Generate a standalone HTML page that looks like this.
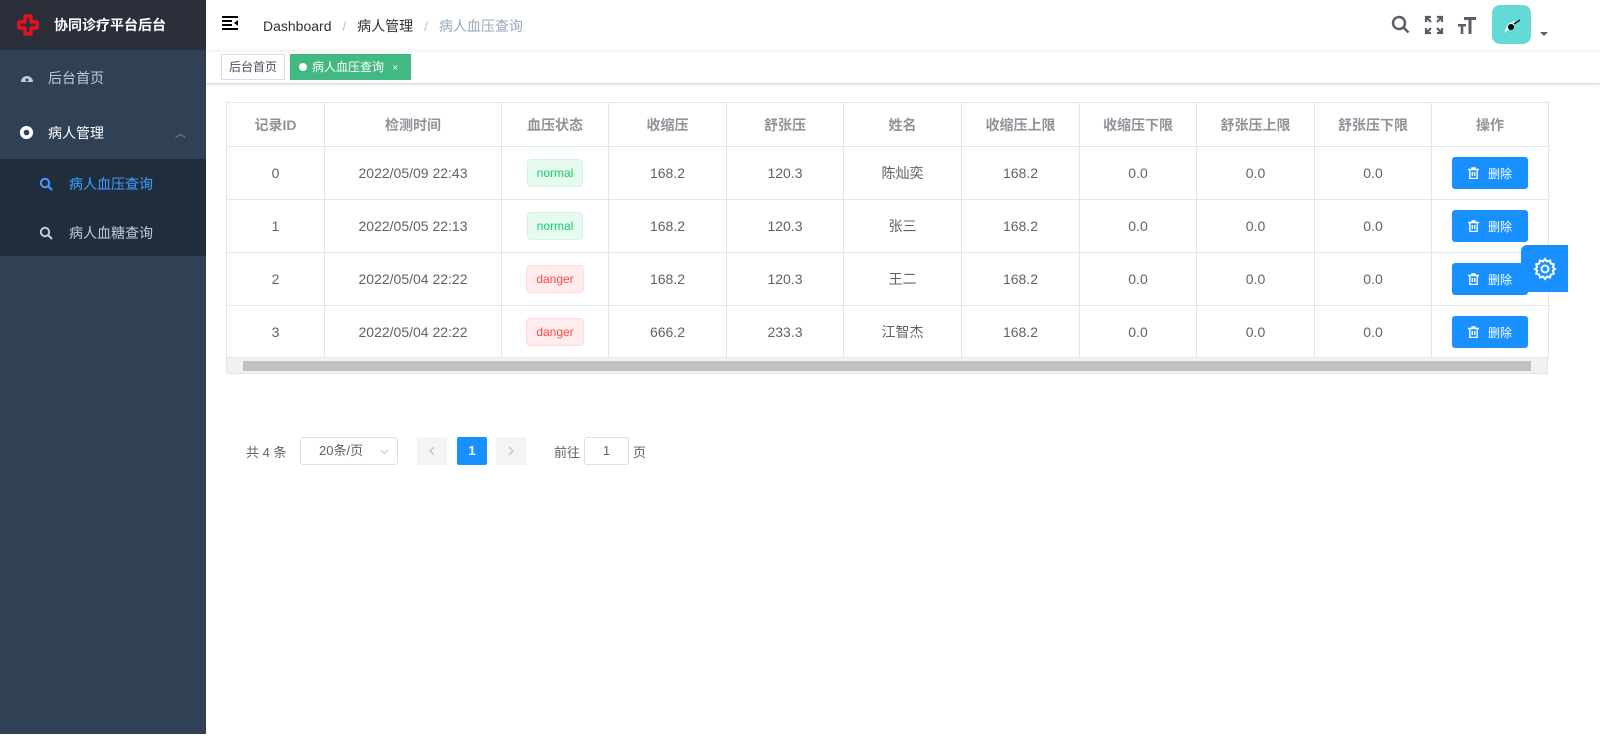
<!DOCTYPE html>
<html><head><meta charset="utf-8"><style>
*{box-sizing:border-box;margin:0;padding:0}
body{width:1600px;height:749px;position:relative;font-family:"Liberation Sans","Noto Sans CJK SC",sans-serif;background:#fff;overflow:hidden;font-size:14px;color:#606266}
.side{position:absolute;left:0;top:0;width:206px;height:734px;background:#304156}
.logo{height:50px;background:#2b2f3a;display:flex;align-items:center;color:#fff;font-weight:bold;font-size:14px}
.mi{position:absolute;left:0;width:206px;display:flex;align-items:center;color:#bfcbd9;font-size:14px}
.hdr{position:absolute;left:206px;top:0;right:0;height:50px;background:#fff;box-shadow:0 1px 4px rgba(0,21,41,.08)}
.tags{position:absolute;left:206px;top:50px;right:0;height:34px;border-bottom:1px solid #d8dce5;box-shadow:0 1px 3px rgba(0,0,0,.12)}
table{position:absolute;left:226px;top:102px;border-collapse:collapse;width:1322px;table-layout:fixed}
td,th{border:1px solid #dfe6ec;text-align:center;font-size:14px;color:#606266}
th{height:44px;color:#909399;font-weight:bold}
td{height:53px}
.tg{display:inline-block;height:28px;line-height:26px;padding:0 9px;font-size:12px;border-radius:4px;border:1px solid}
.n{background:#e7faf0;border-color:#d0f5e0;color:#13ce66}
.d{background:#ffeded;border-color:#ffdbdb;color:#ff4949}
.btn{display:inline-flex;align-items:center;justify-content:center;width:76px;height:32px;background:#1890ff;border-radius:3px;color:#fff;font-size:12px}
.btn svg{margin-right:9px}
</style></head><body>
<div class="side">
 <div class="logo"><svg style="margin:0 14px 0 16px" width="24" height="24" viewBox="0 0 24 24"><path d="M9 3h6v6h6v6h-6v6H9v-6H3V9h6z" fill="none" stroke="#e3101e" stroke-width="3.5" stroke-linejoin="round"/></svg>协同诊疗平台后台</div>
 <div class="mi" style="top:50px;height:56px"><svg style="margin:0 14px 0 20px" width="14" height="14" viewBox="0 0 14 14"><path d="M1 11A6 6 0 1 1 13 11Z" fill="#bfcbd9"/><circle cx="7" cy="9" r="1.5" fill="#304156"/></svg>后台首页</div>
 <div class="mi" style="top:106px;height:53px;color:#fff"><svg style="margin:0 14px 0 19px" width="15" height="15" viewBox="0 0 16 16"><circle cx="8" cy="8" r="7" fill="#fff"/><circle cx="8" cy="8" r="3" fill="#304156"/></svg>病人管理<span style="position:absolute;right:20px;color:#909399;font-size:11px">︿</span></div>
 <div style="position:absolute;top:159px;left:0;width:206px;height:97px;background:#1f2d3d"></div>
 <div class="mi" style="top:159px;height:50px;color:#409eff"><svg style="margin:0 16px 0 39px" width="14" height="14" viewBox="0 0 14 14"><circle cx="6" cy="6" r="4.2" fill="none" stroke="#409eff" stroke-width="2"/><path d="M9 9l4 4" stroke="#409eff" stroke-width="2.2"/></svg>病人血压查询</div>
 <div class="mi" style="top:209px;height:47px"><svg style="margin:0 16px 0 39px" width="14" height="14" viewBox="0 0 14 14"><circle cx="6" cy="6" r="4.2" fill="none" stroke="#bfcbd9" stroke-width="2"/><path d="M9 9l4 4" stroke="#bfcbd9" stroke-width="2.2"/></svg>病人血糖查询</div>
</div>
<div class="hdr">
 <svg style="position:absolute;left:16px;top:16px" width="16" height="14" viewBox="0 0 16 14"><path d="M0 1h16M0 5h10M0 9h10M0 13h16" stroke="#000" stroke-width="2"/><path d="M16 4v6l-4-3z" fill="#000"/></svg>
 <div style="position:absolute;left:57px;top:16px;font-size:14px;color:#303133">Dashboard <span style="color:#c0c4cc;margin:0 7px">/</span> 病人管理 <span style="color:#c0c4cc;margin:0 7px">/</span> <span style="color:#97a8be">病人血压查询</span></div>
 <svg style="position:absolute;left:1185px;top:15px" width="20" height="20" viewBox="0 0 20 20"><circle cx="8" cy="8" r="6" fill="none" stroke="#5a5e66" stroke-width="2.4"/><path d="M12.5 12.5l5 5" stroke="#5a5e66" stroke-width="2.6"/></svg>
 <svg style="position:absolute;left:1218px;top:15px" width="20" height="20" viewBox="0 0 20 20" stroke="#5a5e66" stroke-width="2.2" fill="none"><path d="M2 7V2h5M2 2l5 5M18 7V2h-5M18 2l-5 5M2 13v5h5M2 18l5-5M18 13v5h-5M18 18l-5-5"/></svg>
 <svg style="position:absolute;left:1251px;top:15px" width="20" height="20" viewBox="0 0 20 20" fill="#5a5e66"><path d="M7 2h12v3h-4.5v14h-3V5H7zM1 9h8v2.5H6.3V19H3.7v-7.5H1z"/></svg>
 <div style="position:absolute;left:1286px;top:5px;width:39px;height:39px;border-radius:8px;background:#64dad6"><svg width="39" height="39" viewBox="0 0 39 39"><path d="M12 28l4-9 6-3 2 2-4 4z" fill="#fff"/><circle cx="19" cy="22" r="3" fill="#000"/><path d="M22 19l6-4" stroke="#000" stroke-width="1.3"/></svg></div>
 <div style="position:absolute;left:1334px;top:32px;border:4px solid transparent;border-top-color:#5a5e66"></div>
</div>
<div class="tags">
 <div style="position:absolute;left:15px;top:4px;height:26px;width:64px;border:1px solid #d8dce5;font-size:12px;line-height:24px;text-align:center;color:#495060">后台首页</div>
 <div style="position:absolute;left:84px;top:4px;height:26px;width:121px;background:#42b983;font-size:12px;line-height:26px;color:#fff;padding-left:9px"><span style="display:inline-block;width:8px;height:8px;border-radius:50%;background:#fff;margin-right:5px"></span>病人血压查询 <span style="margin-left:5px;font-size:10px">×</span></div>
</div>
<table>
<colgroup><col style="width:98px"><col style="width:177px"><col style="width:107px"><col style="width:118px"><col style="width:117px"><col style="width:118px"><col style="width:118px"><col style="width:117px"><col style="width:118px"><col style="width:117px"><col style="width:117px"></colgroup>
<tr><th>记录ID</th><th>检测时间</th><th>血压状态</th><th>收缩压</th><th>舒张压</th><th>姓名</th><th>收缩压上限</th><th>收缩压下限</th><th>舒张压上限</th><th>舒张压下限</th><th>操作</th></tr>
<tr><td>0</td><td>2022/05/09 22:43</td><td><span class="tg n">normal</span></td><td>168.2</td><td>120.3</td><td>陈灿奕</td><td>168.2</td><td>0.0</td><td>0.0</td><td>0.0</td><td><span class="btn"><svg width="11" height="12" viewBox="0 0 11 12" fill="none" stroke="#fff" stroke-width="1.4"><path d="M0 2.5h11M4 2.5V1h3v1.5M1.8 2.5v9h7.4v-9M4.3 5v4M6.7 5v4"/></svg>删除</span></td></tr>
<tr><td>1</td><td>2022/05/05 22:13</td><td><span class="tg n">normal</span></td><td>168.2</td><td>120.3</td><td>张三</td><td>168.2</td><td>0.0</td><td>0.0</td><td>0.0</td><td><span class="btn"><svg width="11" height="12" viewBox="0 0 11 12" fill="none" stroke="#fff" stroke-width="1.4"><path d="M0 2.5h11M4 2.5V1h3v1.5M1.8 2.5v9h7.4v-9M4.3 5v4M6.7 5v4"/></svg>删除</span></td></tr>
<tr><td>2</td><td>2022/05/04 22:22</td><td><span class="tg d">danger</span></td><td>168.2</td><td>120.3</td><td>王二</td><td>168.2</td><td>0.0</td><td>0.0</td><td>0.0</td><td><span class="btn"><svg width="11" height="12" viewBox="0 0 11 12" fill="none" stroke="#fff" stroke-width="1.4"><path d="M0 2.5h11M4 2.5V1h3v1.5M1.8 2.5v9h7.4v-9M4.3 5v4M6.7 5v4"/></svg>删除</span></td></tr>
<tr><td>3</td><td>2022/05/04 22:22</td><td><span class="tg d">danger</span></td><td>666.2</td><td>233.3</td><td>江智杰</td><td>168.2</td><td>0.0</td><td>0.0</td><td>0.0</td><td><span class="btn"><svg width="11" height="12" viewBox="0 0 11 12" fill="none" stroke="#fff" stroke-width="1.4"><path d="M0 2.5h11M4 2.5V1h3v1.5M1.8 2.5v9h7.4v-9M4.3 5v4M6.7 5v4"/></svg>删除</span></td></tr>
</table>
<div style="position:absolute;left:226px;top:357px;width:1322px;height:17px;background:#f1f1f1;border:1px solid #dfe6ec"><div style="position:absolute;left:16px;top:3px;width:1288px;height:10px;background:#c1c1c1"></div></div>
<div style="position:absolute;left:1521px;top:245px;width:47px;height:47px;background:#1890ff;border-radius:6px 0 0 6px"><svg style="margin:12px" width="24" height="24" viewBox="0 0 24 24" fill="none" stroke="#fff" stroke-width="2"><circle cx="12" cy="12" r="3.5"/><path d="M12 2l2 2.5 3-1 .8 3 3 .8-1 3L22 12l-2.2 1.7 1 3-3 .8-.8 3-3-1L12 22l-2-2.5-3 1-.8-3-3-.8 1-3L2 12l2.2-1.7-1-3 3-.8.8-3 3 1z"/></svg></div>
<div style="position:absolute;left:246px;top:442px;font-size:13px">共 4 条</div>
<div style="position:absolute;left:300px;top:437px;width:98px;height:28px;border:1px solid #dcdfe6;border-radius:3px;font-size:13px;line-height:26px;padding-left:18px">20条/页<svg style="position:absolute;right:8px;top:11px" width="9" height="6" viewBox="0 0 9 6"><path d="M1 1l3.5 3.5L8 1" stroke="#c0c4cc" fill="none"/></svg></div>
<div style="position:absolute;left:417px;top:437px;width:30px;height:28px;background:#f4f4f5"><svg style="margin:9px 12px" width="6" height="10" viewBox="0 0 6 10"><path d="M5 1L1 5l4 4" stroke="#c0c4cc" stroke-width="1.3" fill="none"/></svg></div>
<div style="position:absolute;left:457px;top:437px;width:30px;height:28px;background:#1890ff;color:#fff;text-align:center;line-height:28px;font-weight:bold;font-size:13px;border-radius:2px">1</div>
<div style="position:absolute;left:496px;top:437px;width:30px;height:28px;background:#f4f4f5"><svg style="margin:9px 12px" width="6" height="10" viewBox="0 0 6 10"><path d="M1 1l4 4-4 4" stroke="#c0c4cc" stroke-width="1.3" fill="none"/></svg></div>
<div style="position:absolute;left:554px;top:442px;font-size:13px">前往</div>
<div style="position:absolute;left:584px;top:437px;width:45px;height:28px;border:1px solid #dcdfe6;border-radius:3px;text-align:center;line-height:26px;font-size:13px">1</div>
<div style="position:absolute;left:633px;top:442px;font-size:13px">页</div>
</body></html>
